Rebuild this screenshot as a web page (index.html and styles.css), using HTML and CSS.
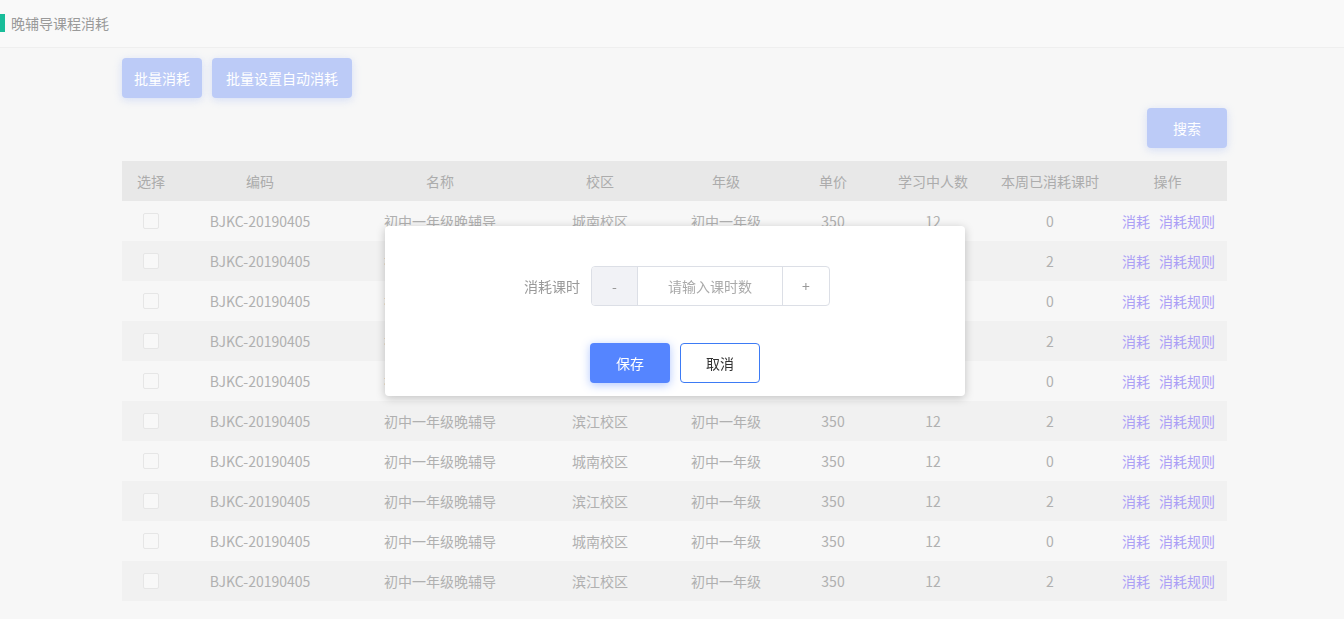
FILE: index.html
```html
<!DOCTYPE html>
<html lang="zh">
<head>
<meta charset="utf-8">
<title>晚辅导课程消耗</title>
<link rel="stylesheet" href="styles.css">
</head>
<body>
<header class="topbar">
  <span class="topbar-mark"></span>
  <span class="topbar-title">晚辅导课程消耗</span>
</header>
<main class="content">
  <div class="actions">
    <button class="btn btn-primary btn-w80">批量消耗</button>
    <button class="btn btn-primary btn-w140">批量设置自动消耗</button>
  </div>
  <div class="search-row">
    <button class="btn btn-primary btn-w80">搜索</button>
  </div>
  <table class="grid">
    <colgroup>
      <col class="c-sel"><col class="c-code"><col class="c-name"><col class="c-campus"><col class="c-grade"><col class="c-price"><col class="c-num"><col class="c-hours"><col class="c-ops">
    </colgroup>
    <thead>
      <tr><th>选择</th><th>编码</th><th>名称</th><th>校区</th><th>年级</th><th>单价</th><th>学习中人数</th><th>本周已消耗课时</th><th>操作</th></tr>
    </thead>
    <tbody id="rows"></tbody>
  </table>
</main>
<div class="overlay">
  <div class="modal">
    <div class="form-row">
      <label class="form-label">消耗课时</label>
      <div class="stepper">
        <span class="stepper-btn stepper-minus">-</span>
        <span class="stepper-input">请输入课时数</span>
        <span class="stepper-btn stepper-plus">+</span>
      </div>
    </div>
    <div class="modal-actions">
      <button class="btn btn-save">保存</button>
      <button class="btn btn-cancel">取消</button>
    </div>
  </div>
</div>
<script src="app.js"></script>
</body>
</html>
```
FILE: app.js
```js
var tbody = document.getElementById('rows');
var html = '';
for (var i = 0; i < 10; i++) {
  var even = i % 2 === 0;
  html += '<tr>' +
    '<td><span class="check"></span></td>' +
    '<td>BJKC-20190405</td>' +
    '<td>初中一年级晚辅导</td>' +
    '<td>' + (even ? '城南校区' : '滨江校区') + '</td>' +
    '<td>初中一年级</td>' +
    '<td>350</td>' +
    '<td>12</td>' +
    '<td>' + (even ? '0' : '2') + '</td>' +
    '<td class="ops"><a class="link">消耗</a><a class="link">消耗规则</a></td>' +
    '</tr>';
}
tbody.innerHTML = html;
```
FILE: styles.css
```css
* { box-sizing: border-box; }
html, body { margin: 0; padding: 0; }
body {
  background: #f7f7f7;
  font-family: "Noto Sans CJK SC", "Noto Sans", sans-serif;
  font-size: 14px;
  color: #aaa;
  height: 619px;
  overflow: hidden;
}
.topbar {
  height: 48px;
  background: #f9f9f9;
  border-bottom: 1px solid #efefef;
  display: flex;
  align-items: center;
}
.topbar-mark {
  width: 5px;
  height: 18px;
  background: #19bd9a;
  margin-top: -2px;
}
.topbar-title {
  margin-left: 6px;
  color: #9a9a9a;
  font-size: 14px;
  margin-top: -2px;
}
.content {
  margin-left: 122px;
  width: 1105px;
}
.actions {
  display: flex;
  gap: 10px;
  padding-top: 10px;
}
.btn {
  height: 40px;
  border: none;
  border-radius: 4px;
  font-family: inherit;
  font-size: 14px;
  padding: 0;
  cursor: pointer;
}
.btn-primary {
  background: #bccbf7;
  color: #fff;
  box-shadow: 0 2px 8px rgba(170, 190, 245, 0.45);
}
.btn-w80 { width: 80px; }
.btn-w140 { width: 140px; }
.search-row {
  display: flex;
  justify-content: flex-end;
  padding-top: 10px;
}
.grid {
  margin-top: 13px;
  width: 1105px;
  border-collapse: collapse;
  table-layout: fixed;
}
.c-sel { width: 58px; }
.c-code { width: 160px; }
.c-name { width: 200px; }
.c-campus { width: 120px; }
.c-grade { width: 132px; }
.c-price { width: 82px; }
.c-num { width: 118px; }
.c-hours { width: 116px; }
.c-ops { width: 119px; }
.grid th {
  height: 40px;
  background: #e8e8e8;
  font-weight: normal;
  color: #acacac;
  padding: 0;
  text-align: center;
}
.grid td {
  height: 40px;
  padding: 0;
  text-align: center;
  color: #b0b0b0;
  white-space: nowrap;
}
.grid tbody tr:nth-child(even) td { background: #f1f1f1; }
.check {
  display: inline-block;
  width: 16px;
  height: 16px;
  border: 1px solid #e6e6e6;
  border-radius: 2px;
  background: #f8f8f8;
  vertical-align: middle;
  margin-top: -4px;
}
.grid td.ops { text-align: left; padding-left: 14px; }
.link {
  color: #ab9ff6;
  margin-right: 9px;
}
.overlay {
  position: fixed;
  inset: 0;
  display: flex;
  align-items: center;
  justify-content: center;
}
.modal {
  width: 580px;
  height: 170px;
  margin-left: 6px;
  margin-top: 2px;
  background: #fff;
  border-radius: 4px;
  box-shadow: 0 2px 10px rgba(0, 0, 0, 0.22);
  padding-top: 40px;
  display: flex;
  flex-direction: column;
  align-items: center;
}
.form-row {
  display: flex;
  align-items: center;
  margin-left: 4px;
}
.form-label {
  color: #999;
  margin-right: 11px;
}
.stepper {
  display: flex;
  width: 239px;
  height: 40px;
  border: 1px solid #dcdfe6;
  border-radius: 4px;
  overflow: hidden;
}
.stepper-btn {
  display: flex;
  align-items: center;
  justify-content: center;
  color: #999;
}
.stepper-minus {
  width: 46px;
  background: #f1f2f6;
  border-right: 1px solid #dcdfe6;
}
.stepper-plus {
  width: 47px;
  border-left: 1px solid #dcdfe6;
}
.stepper-input {
  flex: 1;
  display: flex;
  align-items: center;
  justify-content: center;
  color: #aaa;
}
.modal-actions {
  display: flex;
  gap: 10px;
  margin-top: 37px;
}
.btn-save {
  width: 80px;
  background: #5585ff;
  color: #fff;
  box-shadow: 0 2px 10px rgba(85, 133, 255, 0.45);
}
.btn-cancel {
  width: 80px;
  background: #fff;
  color: #333;
  border: 1px solid #3d7bf5;
}
```
